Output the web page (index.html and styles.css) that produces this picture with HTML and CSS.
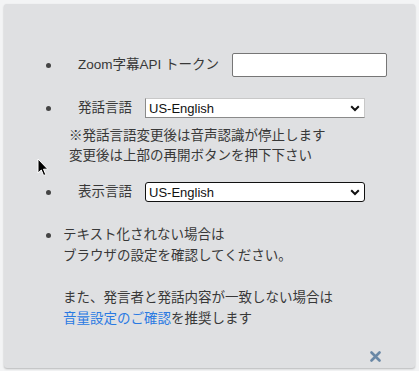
FILE: index.html
```html
<!DOCTYPE html>
<html lang="ja">
<head>
  <meta charset="UTF-8">
  <meta name="viewport" content="width=device-width, initial-scale=1.0">
  <title>字幕設定</title>
  <link rel="stylesheet" href="styles.css">
</head>
<body>

<div class="settings-panel">
  <ul class="settings-list">
    <li class="item-token">
      <div class="row">
        <label for="apiToken">Zoom字幕API トークン</label>
        <input type="text" id="apiToken">
      </div>
    </li>
    <li class="item-select">
      <div class="row">
        <label for="speechLang">発話言語</label>
        <span class="select-wrap">
          <select id="speechLang">
            <option>US-English</option>
          </select>
          <svg class="chevron" width="10" height="7" viewBox="0 0 10 7"><path d="M1.2 1.3 L5 5 L8.8 1.3" fill="none" stroke="#111" stroke-width="2"/></svg>
        </span>
      </div>
      <p class="note">※発話言語変更後は音声認識が停止します<br>変更後は上部の再開ボタンを押下下さい</p>
    </li>
    <li class="item-select">
      <div class="row">
        <label for="displayLang">表示言語</label>
        <span class="select-wrap focused">
          <select id="displayLang">
            <option>US-English</option>
          </select>
          <svg class="chevron" width="10" height="7" viewBox="0 0 10 7"><path d="M1.2 1.3 L5 5 L8.8 1.3" fill="none" stroke="#111" stroke-width="2"/></svg>
        </span>
      </div>
    </li>
    <li class="item-help">
      <div class="help">
        <p>テキスト化されない場合は<br>ブラウザの設定を確認してください。</p>
        <p>また、発言者と発話内容が一致しない場合は<br><a href="#">音量設定のご確認</a>を推奨します</p>
      </div>
    </li>
  </ul>

  <div class="panel-footer">
    <button class="close-btn" aria-label="閉じる">
      <svg width="11" height="11" viewBox="0 0 11 11"><path d="M1.5 1.5 L9.5 9.5 M9.5 1.5 L1.5 9.5" stroke="#6a88a6" stroke-width="2.6" stroke-linecap="round"/></svg>
    </button>
  </div>
</div>

<svg class="cursor" width="12" height="19" viewBox="0 0 12 19"><path d="M1 1 L1 15 L4.3 12 L6.6 17.5 L8.8 16.6 L6.5 11.2 L10.8 11.2 Z" fill="#000" stroke="#fff" stroke-width="1"/></svg>

</body>
</html>
```

FILE: styles.css
```css
body {
  margin: 0;
  padding: 4px 4px 3px 4px;
  background-color: #f3f4f5;
  font-family: 'Liberation Sans', 'Noto Sans CJK JP', sans-serif;
  color: #383838;
  font-size: 13.5px;
}

.settings-panel {
  width: 411px;
  height: 364px;
  box-sizing: border-box;
  background-color: #dfe0e2;
  border-radius: 3px;
  box-shadow: 0 1px 2px rgba(0, 0, 0, 0.25);
  padding-top: 49px;
  display: flex;
  flex-direction: column;
}

.settings-list {
  list-style: none;
  margin: 0;
  padding: 0 0 0 42px;
}

.settings-list li {
  display: grid;
  grid-template-columns: 5px auto;
  column-gap: 12px;
  align-items: center;
}

.settings-list li::before {
  content: "";
  width: 5px;
  height: 5px;
  border-radius: 50%;
  background-color: #444;
}

.item-token {
  margin-bottom: 21px;
}

.item-select {
  margin-bottom: 16px;
}

.item-help {
  margin-top: 22px;
}

.item-help::before {
  align-self: start;
  margin-top: 9px;
}

.row {
  display: flex;
  align-items: center;
}

.row label {
  margin-left: 15px;
  margin-right: 13px;
  line-height: 20px;
}

#apiToken {
  width: 155px;
  height: 24px;
  box-sizing: border-box;
  margin: 0;
  border: 1px solid #767676;
  border-radius: 2px;
  background: #fff;
}

.select-wrap {
  position: relative;
  display: inline-block;
}

.select-wrap select {
  appearance: none;
  width: 220px;
  height: 20px;
  box-sizing: border-box;
  margin: 0;
  padding: 0 0 0 3px;
  border: 1px solid #8a8a8a;
  border-top-color: #c8c8c8;
  border-right-color: #c8c8c8;
  border-radius: 0;
  background: #fff;
  font-family: 'Liberation Sans', sans-serif;
  font-size: 13px;
  color: #111;
}

.select-wrap.focused select {
  border: 1px solid #111;
  border-radius: 3px;
}

.chevron {
  position: absolute;
  right: 5px;
  top: 7px;
  pointer-events: none;
}

.note {
  grid-column: 2;
  margin: 8px 0 0 6px;
  line-height: 20px;
}

.help {
  grid-column: 2;
}

.help p {
  margin: 0 0 21px 0;
  line-height: 21px;
}

.help a {
  color: #2a7ae2;
  text-decoration: none;
}

.panel-footer {
  margin-top: auto;
  display: flex;
  justify-content: flex-end;
  padding: 0 34px 8px 0;
}

.close-btn {
  border: none;
  background: none;
  padding: 0;
  width: 11px;
  height: 11px;
  cursor: pointer;
}

.cursor {
  position: absolute;
  left: 37px;
  top: 158px;
}
```
